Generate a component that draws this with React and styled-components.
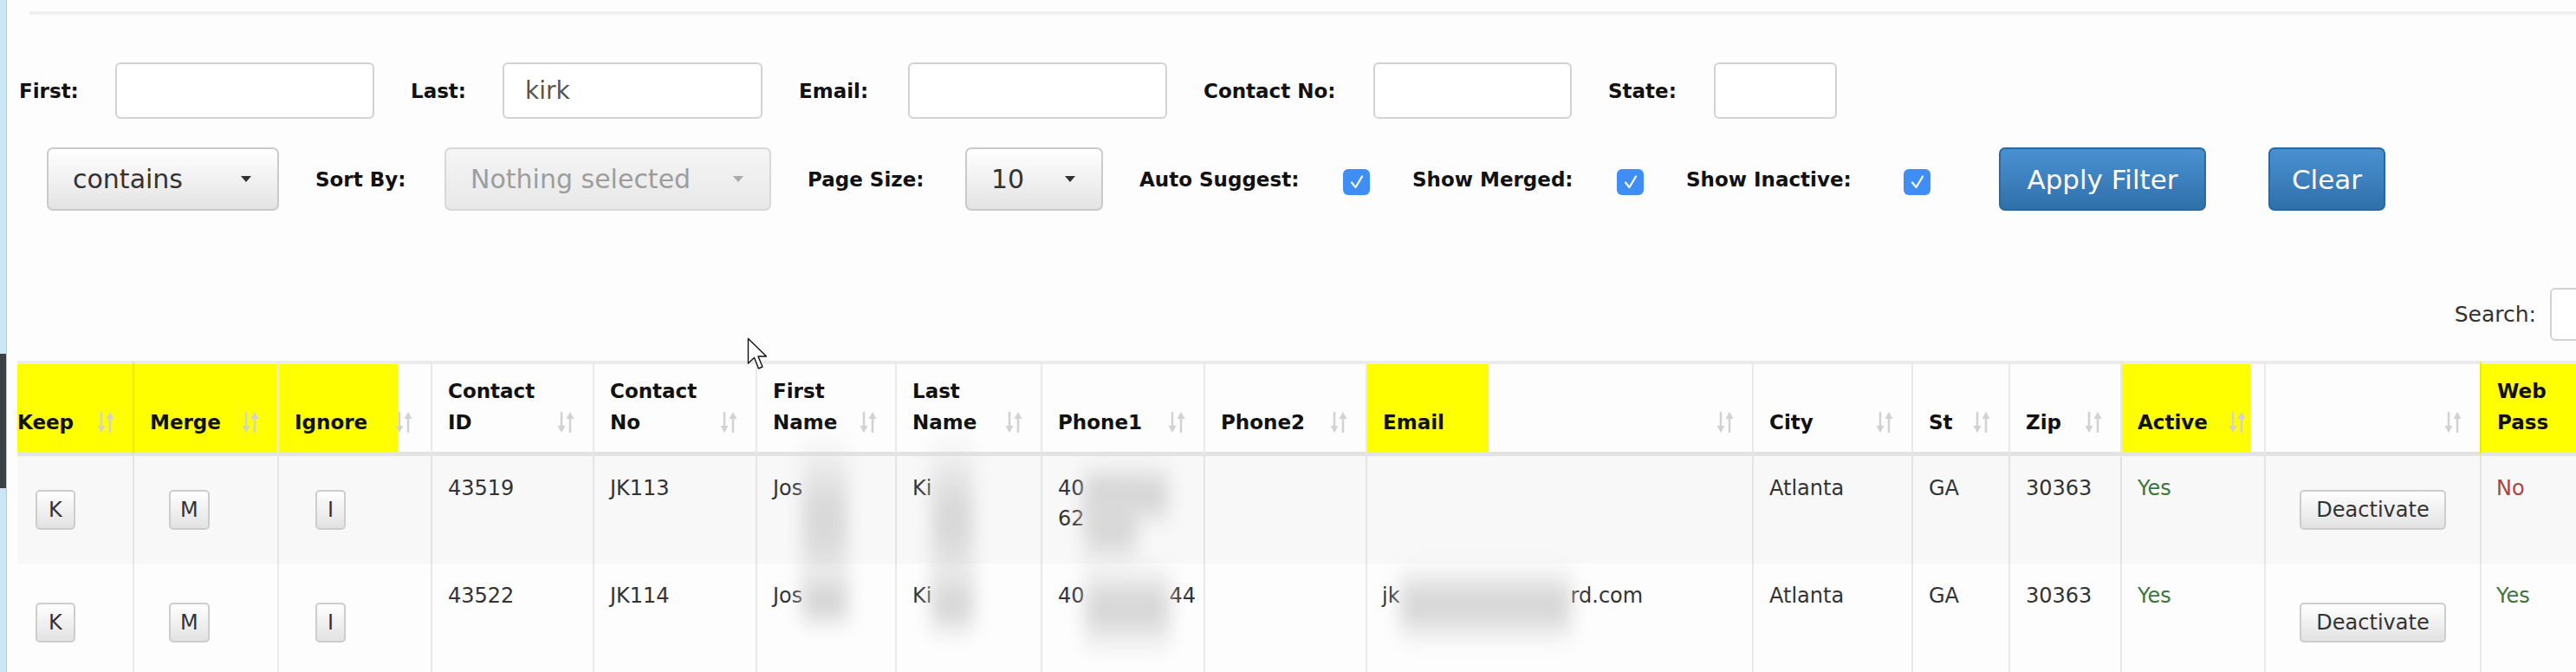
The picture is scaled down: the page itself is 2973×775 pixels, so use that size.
import styled, { createGlobalStyle } from "styled-components";

const GlobalStyle = createGlobalStyle`
  html, body {
    margin: 0;
    padding: 0;
    background: #fdfdfe;
    overflow: hidden;
  }
  body {
    font-family: "DejaVu Sans", Verdana, sans-serif;
    color: #333;
  }
`;

const Page = styled.div`
  position: relative;
  display: flex;
  width: 3300px;
  height: 775px;
`;

const Strip = styled.div`
  flex: none;
  width: 7px;
  display: flex;
  flex-direction: column;
  border-right: 1px solid #a8cfe6;
`;

const StripPart = styled.div`
  flex: ${({ $h }) => ($h ? "none" : "1")};
  height: ${({ $h }) => ($h ? `${$h}px` : "auto")};
  background: ${({ $dark }) => ($dark ? "#3b4046" : "#c9e5f6")};
`;

const Main = styled.div`
  flex: 1;
  padding-left: 14px;
`;

const Divider = styled.div`
  margin: 13px 0 0 12px;
  height: 4px;
  background: #f0f0f0;
`;

const FilterRow = styled.div`
  display: flex;
  align-items: center;
  gap: 42px;
  margin-top: ${({ $mt }) => $mt}px;
  margin-left: ${({ $ml }) => $ml || 0}px;
`;

const Field = styled.div`
  display: flex;
  align-items: center;
  margin-right: ${({ $mr }) => $mr || 0}px;
`;

const Label = styled.span`
  width: ${({ $w }) => $w}px;
  flex: none;
  font-size: 23px;
  font-weight: bold;
  color: #111;
  white-space: nowrap;
`;

const TextInput = styled.input`
  box-sizing: border-box;
  width: ${({ $w }) => $w}px;
  height: ${({ $h }) => $h || 65}px;
  padding: 0 24px;
  border: 2px solid #d2d2d2;
  border-radius: 6px;
  background: #fff;
  font: 28px "DejaVu Sans", Verdana, sans-serif;
  color: #555;
  outline: none;
`;

const SelectBox = styled.div`
  box-sizing: border-box;
  width: ${({ $w }) => $w}px;
  height: 73px;
  display: flex;
  align-items: center;
  justify-content: space-between;
  padding: 0 30px 0 28px;
  border: 2px solid ${({ $dim }) => ($dim ? "#d8d8d8" : "#cacaca")};
  border-radius: 7px;
  background: ${({ $dim }) =>
    $dim ? "linear-gradient(#f5f5f5, #e8e8e8)" : "linear-gradient(#ffffff, #e3e3e3)"};
  color: ${({ $dim }) => ($dim ? "#9d9d9d" : "#333")};
  font-size: 30px;
  white-space: nowrap;
`;

const Caret = styled.span`
  width: 0;
  height: 0;
  border-left: 6px solid transparent;
  border-right: 6px solid transparent;
  border-top: 7px solid ${({ $dim }) => ($dim ? "#aaa" : "#333")};
`;

const CheckBox = styled.span`
  flex: none;
  width: 31px;
  height: 30px;
  margin-top: 6px;
  border-radius: 6px;
  background: #3f8ef5;
  display: flex;
  align-items: center;
  justify-content: center;
`;

const PrimaryButton = styled.button`
  box-sizing: border-box;
  width: ${({ $w }) => $w}px;
  height: 73px;
  margin-left: ${({ $ml }) => $ml || 0}px;
  border: 2px solid #2c689d;
  border-radius: 7px;
  background: linear-gradient(#4a91d2, #2f70aa);
  color: #fff;
  font: 31px "DejaVu Sans", Verdana, sans-serif;
`;

const TableArea = styled.div`
  margin-left: -2px;
  width: 3218px;
`;

const SearchRow = styled.div`
  display: flex;
  justify-content: flex-end;
  align-items: center;
  margin-top: 89px;
  font-size: 25px;
  color: #333;
`;

const SearchLabel = styled.span`
  margin-right: 16px;
`;

const Table = styled.table`
  margin-top: 23px;
  width: 3218px;
  table-layout: fixed;
  border-collapse: separate;
  border-spacing: 0;
`;

const Col = styled.col`
  width: ${({ $w }) => $w}px;
`;

const Th = styled.th`
  padding: 13px 20px 16px ${({ $flush }) => ($flush ? 0 : 18)}px;
  vertical-align: bottom;
  text-align: left;
  font-size: 23px;
  line-height: 36px;
  font-weight: bold;
  color: #111;
  border-top: 4px solid #ebebeb;
  border-bottom: 5px solid #e3e3e3;
  border-left: ${({ $first }) => ($first ? "none" : "2px solid rgba(0, 0, 0, 0.08)")};
  background: ${({ $mark }) =>
    $mark === "full"
      ? "#ffff00"
      : $mark
      ? `linear-gradient(to right, #ffff00 ${$mark}px, transparent ${$mark}px)`
      : "transparent"};
`;

const HeadInner = styled.div`
  display: flex;
  justify-content: space-between;
  align-items: flex-end;
`;

const SortIcon = styled.svg`
  flex: none;
  margin-bottom: 5px;
`;

const Tr = styled.tr`
  background: ${({ $odd }) => ($odd ? "#f8f8f9" : "#fdfdfe")};
  & > td {
    height: ${({ $h }) => $h}px;
  }
  & + & td {
    border-top: 3px solid #e6e6e6;
  }
`;

const Td = styled.td`
  padding: 20px 12px 20px ${({ $pl }) => ($pl === undefined ? 18 : $pl)}px;
  vertical-align: ${({ $mid }) => ($mid ? "middle" : "top")};
  text-align: ${({ $center }) => ($center ? "center" : "left")};
  font-size: 24px;
  line-height: 35px;
  color: ${({ $tone }) =>
    $tone === "yes" ? "#3c763d" : $tone === "no" ? "#a94442" : "#333"};
  border-left: ${({ $first }) => ($first ? "none" : "2px solid rgba(0, 0, 0, 0.08)")};
  white-space: nowrap;
  overflow: visible;
`;

const SmallButton = styled.button`
  height: 46px;
  padding: 0 ${({ $px }) => $px || 12}px;
  border: 2px solid #cdcdcd;
  border-radius: 5px;
  background: linear-gradient(#ffffff, #e2e2e2);
  color: #333;
  font: 24px "DejaVu Sans", Verdana, sans-serif;
`;

const Redact = styled.span`
  display: inline-block;
  width: ${({ $w }) => $w}px;
  height: 35px;
  vertical-align: top;
  background: #d6d6d6;
  filter: blur(10px);
  transform: scaleY(${({ $s }) => $s || 1});
  transform-origin: top center;
`;

const Cursor = styled.svg`
  position: absolute;
  left: 862px;
  top: 389px;
`;

const Sort = () => (
  <SortIcon width="22" height="26" viewBox="0 0 22 26">
    <path d="M6 1 V20" stroke="#d2d2d2" strokeWidth="2.5" />
    <path d="M1.5 17 H10.5 L6 25 Z" fill="#d2d2d2" />
    <path d="M16 25 V6" stroke="#d2d2d2" strokeWidth="2.5" />
    <path d="M11.5 9 H20.5 L16 1 Z" fill="#d2d2d2" />
  </SortIcon>
);

const Check = () => (
  <svg width="20" height="20" viewBox="0 0 20 20">
    <path d="M4 10.5 L8.5 16 L16 3.5" fill="none" stroke="#fff" strokeWidth="2.2" strokeLinecap="round" strokeLinejoin="round" />
  </svg>
);

const columns = [
  { w: 133, title: "Keep", mark: "full", flush: true },
  { w: 167, title: "Merge", mark: "full" },
  { w: 177, title: "Ignore", mark: 137 },
  { w: 187, title: ["Contact", "ID"] },
  { w: 188, title: ["Contact", "No"] },
  { w: 161, title: ["First", "Name"] },
  { w: 168, title: ["Last", "Name"] },
  { w: 188, title: "Phone1" },
  { w: 187, title: "Phone2" },
  { w: 446, title: "Email", mark: 140 },
  { w: 184, title: "City" },
  { w: 112, title: "St" },
  { w: 129, title: "Zip" },
  { w: 166, title: "Active", mark: 148 },
  { w: 249, title: "" },
  { w: 376, title: ["Web", "Pass"], mark: "full" },
];

const rows = [
  {
    id: "43519",
    no: "JK113",
    h: 84,
    first: <>Jos<Redact $w={52} $s={3.1} /></>,
    last: <>Ki<Redact $w={48} $s={3.1} /></>,
    phone1: (
      <>
        40<Redact $w={96} $s={1.4} />
        <br />
        62<Redact $w={60} $s={1.6} />
      </>
    ),
    email: "",
    web: "No",
  },
  {
    id: "43522",
    no: "JK114",
    h: 96,
    first: <>Jos<Redact $w={52} $s={1.3} /></>,
    last: <>Ki<Redact $w={48} $s={1.5} /></>,
    phone1: <>40<Redact $w={98} $s={1.8} />44</>,
    email: <>jk<Redact $w={197} $s={1.6} />rd.com</>,
    web: "Yes",
  },
];

export default function App() {
  return (
    <>
      <GlobalStyle />
      <Page>
        <Strip>
          <StripPart $h={408} />
          <StripPart $h={155} $dark />
          <StripPart />
        </Strip>
        <Main>
          <Divider />

          <FilterRow $mt={55}>
            <Field>
              <Label $w={111}>First:</Label>
              <TextInput $w={299} />
            </Field>
            <Field>
              <Label $w={106}>Last:</Label>
              <TextInput $w={300} defaultValue="kirk" />
            </Field>
            <Field>
              <Label $w={126}>Email:</Label>
              <TextInput $w={299} />
            </Field>
            <Field>
              <Label $w={196}>Contact No:</Label>
              <TextInput $w={229} />
            </Field>
            <Field>
              <Label $w={122}>State:</Label>
              <TextInput $w={142} />
            </Field>
          </FilterRow>

          <FilterRow $mt={33} $ml={32}>
            <SelectBox $w={268}>
              contains <Caret />
            </SelectBox>
            <Field>
              <Label $w={149}>Sort By:</Label>
              <SelectBox $w={377} $dim>
                Nothing selected <Caret $dim />
              </SelectBox>
            </Field>
            <Field>
              <Label $w={182}>Page Size:</Label>
              <SelectBox $w={159}>
                10 <Caret />
              </SelectBox>
            </Field>
            <Field $mr={7}>
              <Label $w={235}>Auto Suggest:</Label>
              <CheckBox><Check /></CheckBox>
            </Field>
            <Field $mr={7}>
              <Label $w={236}>Show Merged:</Label>
              <CheckBox><Check /></CheckBox>
            </Field>
            <Field>
              <Label $w={251}>Show Inactive:</Label>
              <CheckBox><Check /></CheckBox>
            </Field>
            <PrimaryButton $w={239} $ml={37}>Apply Filter</PrimaryButton>
            <PrimaryButton $w={135} $ml={30}>Clear</PrimaryButton>
          </FilterRow>

          <TableArea>
            <SearchRow>
              <SearchLabel>Search:</SearchLabel>
              <TextInput $w={295} $h={61} />
            </SearchRow>

            <Table>
              <colgroup>
                {columns.map((c, i) => (
                  <Col key={i} $w={c.w} />
                ))}
              </colgroup>
              <thead>
                <tr>
                  {columns.map((c, i) => (
                    <Th key={i} $mark={c.mark} $flush={c.flush} $first={i === 0}>
                      <HeadInner>
                        <span>
                          {Array.isArray(c.title) ? (
                            <>
                              {c.title[0]}
                              <br />
                              {c.title[1]}
                            </>
                          ) : (
                            c.title
                          )}
                        </span>
                        <Sort />
                      </HeadInner>
                    </Th>
                  ))}
                </tr>
              </thead>
              <tbody>
                {rows.map((r, i) => (
                  <Tr key={r.id} $odd={i === 0} $h={r.h}>
                    <Td $first $mid $pl={21}>
                      <SmallButton $px={13}>K</SmallButton>
                    </Td>
                    <Td $mid $pl={40}>
                      <SmallButton $px={11}>M</SmallButton>
                    </Td>
                    <Td $mid $pl={42}>
                      <SmallButton>I</SmallButton>
                    </Td>
                    <Td>{r.id}</Td>
                    <Td>{r.no}</Td>
                    <Td>{r.first}</Td>
                    <Td>{r.last}</Td>
                    <Td>{r.phone1}</Td>
                    <Td></Td>
                    <Td $pl={17}>{r.email}</Td>
                    <Td>Atlanta</Td>
                    <Td>GA</Td>
                    <Td>30363</Td>
                    <Td $tone="yes">Yes</Td>
                    <Td $mid $center $pl={12}>
                      <SmallButton $px={17}>Deactivate</SmallButton>
                    </Td>
                    <Td $pl={17} $tone={r.web === "Yes" ? "yes" : "no"}>{r.web}</Td>
                  </Tr>
                ))}
              </tbody>
            </Table>
          </TableArea>
        </Main>

        <Cursor width="26" height="40" viewBox="0 0 26 40">
          <path
            d="M1.5 1.5 L1.5 30 L8.5 23.5 L13.5 36 L18 34 L13 22 L22.5 22 Z"
            fill="#fff"
            stroke="#111"
            strokeWidth="1.4"
            strokeLinejoin="round"
          />
        </Cursor>
      </Page>
    </>
  );
}
